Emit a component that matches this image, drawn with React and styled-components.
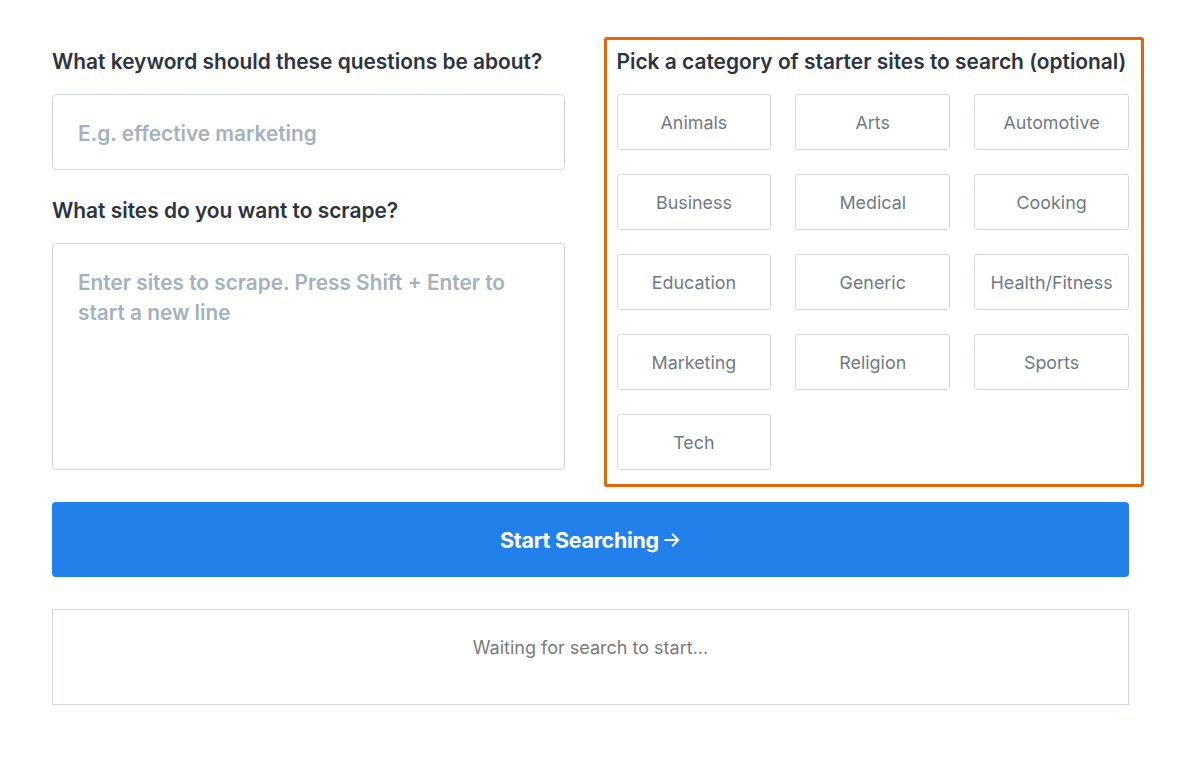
import React from 'react'
import styled, { createGlobalStyle } from 'styled-components'

const GlobalStyle = createGlobalStyle`
  body {
    margin: 0;
    background: #fff;
    font-family: Inter, "Noto Sans", sans-serif;
  }
  * { box-sizing: border-box; }
`

const categories = [
  'Animals', 'Arts', 'Automotive',
  'Business', 'Medical', 'Cooking',
  'Education', 'Generic', 'Health/Fitness',
  'Marketing', 'Religion', 'Sports',
  'Tech',
]

const App = () => {
  return (
    <>
      <GlobalStyle />
      <Page>
        <Columns>
          <Column>
            <Label>What keyword should these questions be about?</Label>
            <TextInput placeholder="E.g. effective marketing" />
            <Label>What sites do you want to scrape?</Label>
            <SitesArea placeholder="Enter sites to scrape. Press Shift + Enter to start a new line" />
          </Column>
          <Highlighted>
            <Label>Pick a category of starter sites to search (optional)</Label>
            <CategoryGrid>
              {categories.map((c) => (
                <CategoryButton key={c}>{c}</CategoryButton>
              ))}
            </CategoryGrid>
          </Highlighted>
        </Columns>
        <StartButton>
          Start Searching
          <svg width="18" height="18" viewBox="0 0 24 24" fill="none" stroke="currentColor" strokeWidth="2.6" strokeLinecap="round" strokeLinejoin="round">
            <path d="M3 12h17" />
            <path d="M13 4.5l7.5 7.5-7.5 7.5" />
          </svg>
        </StartButton>
        <Status>Waiting for search to start...</Status>
      </Page>
    </>
  )
}

export default App

const Page = styled.div`
  padding: 48px 52px 40px;
  display: flex;
  flex-direction: column;
  gap: 32px;
`

const Columns = styled.div`
  display: grid;
  grid-template-columns: 1fr 1fr;
  column-gap: 52px;
  align-items: start;
`

const Column = styled.div`
  display: flex;
  flex-direction: column;
`

const Highlighted = styled(Column)`
  position: relative;
  &::after {
    content: '';
    position: absolute;
    top: -11px;
    left: -13px;
    right: -15px;
    bottom: -17px;
    border: 3.5px solid #e5650b;
    border-radius: 3px;
    pointer-events: none;
  }
`

const Label = styled.h2`
  margin: 0 0 18px;
  font-size: 20.9px;
  line-height: 28px;
  font-weight: 600;
  color: #2d3340;
  white-space: nowrap;
`

const fieldStyles = `
  width: 100%;
  border: 1px solid #cfd6df;
  border-radius: 4px;
  font-family: Inter, "Noto Sans", sans-serif;
  font-size: 20.8px;
  font-weight: 600;
  color: #2d3340;
  outline: none;
  &::placeholder {
    color: #a5b1bf;
    opacity: 1;
  }
`

const TextInput = styled.input`
  ${fieldStyles}
  height: 76px;
  padding: 2px 25px 0;
  margin-bottom: 27px;
`

const SitesArea = styled.textarea`
  ${fieldStyles}
  height: 227px;
  padding: 24px 25px;
  line-height: 30px;
  resize: none;
`

const CategoryGrid = styled.div`
  display: grid;
  grid-template-columns: repeat(3, 1fr);
  gap: 24px;
`

const CategoryButton = styled.button`
  height: 56px;
  background: #fff;
  border: 1px solid #d3d9e1;
  border-radius: 3px;
  font-family: Inter, "Noto Sans", sans-serif;
  font-size: 17.9px;
  color: #707a84;
  cursor: pointer;
`

const StartButton = styled.button`
  height: 75px;
  width: 100%;
  display: flex;
  align-items: center;
  justify-content: center;
  gap: 4px;
  background: #2180e9;
  border: none;
  border-radius: 4px;
  color: #fff;
  font-family: Inter, "Noto Sans", sans-serif;
  font-size: 21.5px;
  font-weight: 700;
  letter-spacing: -0.3px;
  cursor: pointer;
`

const Status = styled.div`
  height: 96px;
  display: flex;
  justify-content: center;
  padding-top: 26px;
  border: 1px solid #d3d9e1;
  font-size: 18px;
  line-height: 24px;
  color: #7a7a7a;
`
